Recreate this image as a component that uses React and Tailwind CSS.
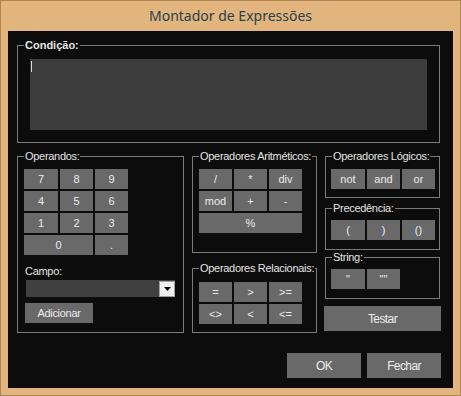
import React from "react";

function Group({ label, bold, className, children }) {
  return (
    <div className={"relative border border-[#7a7a7a] " + className}>
      <span
        className={
          "absolute top-[-8px] left-[6px] px-[1px] bg-[#0c0c0c] leading-[14px] whitespace-nowrap text-[#e4e4e4] " +
          (bold ? "font-bold text-[11px]" : "text-[11px] tracking-[-0.3px]")
        }
      >
        {label}
      </span>
      {children}
    </div>
  );
}

function Btn({ children, className = "" }) {
  return (
    <div
      className={
        "bg-[#696969] text-[#ececec] flex items-center justify-center text-[11px] leading-none " +
        className
      }
    >
      {children}
    </div>
  );
}

export default function App() {
  return (
    <div className="w-[461px] h-[396px] bg-[#e1b57d] border border-[#b08650] flex flex-col font-['Liberation_Sans',Arial,sans-serif]">
      <div className="h-[30px] flex items-center justify-center text-[14px] text-[#2a3f4e] font-['Noto_Sans',sans-serif] pb-[1px]">
        Montador de Expressões
      </div>
      <div className="mx-[7px] mb-[7px] flex-1 bg-[#0c0c0c] pl-[9px] pt-[14px]">
        <Group label="Condição:" bold className="w-[423px] h-[98px] pl-[12px] pt-[13px]">
          <div className="w-[397px] h-[71px] bg-[#3c3c3c] pl-[1px] pt-[2px]">
            <div className="w-[1px] h-[11px] bg-[#d8d8d8]" />
          </div>
        </Group>

        <div className="mt-[13px] flex">
          <Group label="Operandos:" className="w-[167px] h-[177px] pl-[6px] pt-[12px]">
            <div className="grid grid-cols-[34px_33px_33px] auto-rows-[20px] gap-[2px]">
              <Btn>7</Btn>
              <Btn>8</Btn>
              <Btn>9</Btn>
              <Btn>4</Btn>
              <Btn>5</Btn>
              <Btn>6</Btn>
              <Btn>1</Btn>
              <Btn>2</Btn>
              <Btn>3</Btn>
              <Btn className="col-span-2">0</Btn>
              <Btn>.</Btn>
            </div>
            <div className="mt-[9px] ml-[1px] text-[11px] leading-[14px] tracking-[-0.3px] text-[#e4e4e4]">
              Campo:
            </div>
            <div className="mt-[2px] ml-[2px] w-[149px] h-[17px] bg-[#404040] pt-[1px] flex justify-end">
              <div className="w-[16px] h-[16px] bg-[#f0f0f0] border border-[#a0a0a0] flex items-center justify-center">
                <svg width="7" height="4" viewBox="0 0 7 4">
                  <polygon points="0,0 7,0 3.5,4" fill="#000" />
                </svg>
              </div>
            </div>
            <Btn className="mt-[6px] ml-[1px] w-[68px] h-[20px] tracking-[-0.3px]">Adicionar</Btn>
          </Group>

          <div className="ml-[8px] w-[125px] flex flex-col">
            <Group label="Operadores Aritméticos:" className="h-[97px] pl-[6px] pt-[12px]">
              <div className="grid grid-cols-[33px_33px_33px] auto-rows-[20px] gap-[2px]">
                <Btn>/</Btn>
                <Btn>*</Btn>
                <Btn>div</Btn>
                <Btn>mod</Btn>
                <Btn>+</Btn>
                <Btn>-</Btn>
                <Btn className="col-span-3">%</Btn>
              </div>
            </Group>
            <Group label="Operadores Relacionais:" className="mt-[15px] h-[65px] pl-[6px] pt-[13px]">
              <div className="grid grid-cols-[33px_33px_33px] auto-rows-[20px] gap-[2px]">
                <Btn>=</Btn>
                <Btn>&gt;</Btn>
                <Btn>&gt;=</Btn>
                <Btn>&lt;&gt;</Btn>
                <Btn>&lt;</Btn>
                <Btn>&lt;=</Btn>
              </div>
            </Group>
          </div>

          <div className="ml-[7px] w-[117px] flex flex-col">
            <Group label="Operadores Lógicos:" className="ml-[1px] w-[115px] h-[42px] pl-[5px] pt-[12px]">
              <div className="grid grid-cols-[34px_33px_33px] auto-rows-[20px] gap-[2px]">
                <Btn>not</Btn>
                <Btn>and</Btn>
                <Btn>or</Btn>
              </div>
            </Group>
            <Group label="Precedência:" className="mt-[10px] ml-[1px] w-[115px] h-[42px] pl-[5px] pt-[11px]">
              <div className="grid grid-cols-[34px_33px_33px] auto-rows-[20px] gap-[2px]">
                <Btn>(</Btn>
                <Btn>)</Btn>
                <Btn>()</Btn>
              </div>
            </Group>
            <Group label="String:" className="mt-[7px] ml-[1px] w-[115px] h-[42px] pl-[5px] pt-[11px]">
              <div className="grid grid-cols-[34px_33px_33px] auto-rows-[20px] gap-[2px]">
                <Btn>"</Btn>
                <Btn>""</Btn>
              </div>
            </Group>
            <Btn className="mt-[7px] w-[117px] h-[25px] text-[12px] tracking-[-0.6px]">Testar</Btn>
          </div>
        </div>

        <div className="mt-[20px] w-[424px] flex justify-end gap-[6px]">
          <Btn className="w-[74px] h-[25px] text-[12px] tracking-[-0.6px]">OK</Btn>
          <Btn className="w-[74px] h-[25px] text-[12px] tracking-[-0.6px]">Fechar</Btn>
        </div>
      </div>
    </div>
  );
}
